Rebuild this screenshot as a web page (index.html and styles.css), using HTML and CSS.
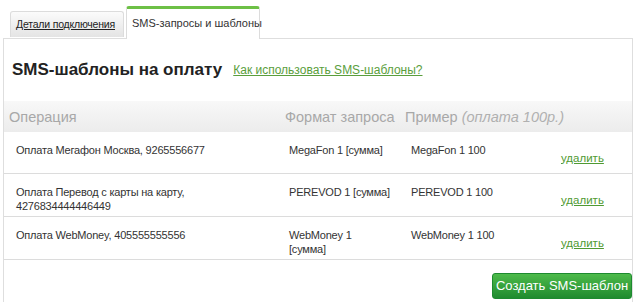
FILE: index.html
```html
<!DOCTYPE html>
<html lang="ru">
<head>
  <meta charset="UTF-8" />
  <title>SMS-шаблоны</title>
  <link rel="stylesheet" href="styles.css">
</head>
<body>
  <div class="wrap">
    <div class="tabs">
      <a class="tab" href="#">Детали подключения</a>
      <span class="tab active">SMS-запросы и шаблоны</span>
    </div>
    <div class="panel">
      <div class="title">
        <h1>SMS-шаблоны на оплату</h1>
        <a class="help" href="#">Как использовать SMS-шаблоны?</a>
      </div>
      <table class="templates">
        <colgroup>
          <col class="c-op">
          <col class="c-fmt">
          <col class="c-ex">
          <col class="c-del">
        </colgroup>
        <thead>
          <tr>
            <th>Операция</th>
            <th>Формат запроса</th>
            <th>Пример <i>(оплата 100р.)</i></th>
            <th></th>
          </tr>
        </thead>
        <tbody>
          <tr class="short">
            <td>Оплата Мегафон Москва, 9265556677</td>
            <td>MegaFon 1 [сумма]</td>
            <td>MegaFon 1 100</td>
            <td class="del"><a href="#">удалить</a></td>
          </tr>
          <tr>
            <td>Оплата Перевод с карты на карту,<br>4276834444446449</td>
            <td>PEREVOD 1 [сумма]</td>
            <td>PEREVOD 1 100</td>
            <td class="del"><a href="#">удалить</a></td>
          </tr>
          <tr>
            <td>Оплата WebMoney, 405555555556</td>
            <td class="narrow">WebMoney 1 [сумма]</td>
            <td>WebMoney 1 100</td>
            <td class="del"><a href="#">удалить</a></td>
          </tr>
        </tbody>
      </table>
      <div class="actions">
        <button class="create">Создать SMS-шаблон</button>
      </div>
    </div>
  </div>
</body>
</html>
```

FILE: styles.css
```css
body {
  margin: 0;
  font-family: "Liberation Sans", Arial, sans-serif;
  font-size: 12px;
  color: #333;
  background: #fff;
}
.wrap {
  margin-left: 3px;
  width: 630px;
}
/* Tabs */
.tabs {
  display: flex;
  align-items: flex-end;
  gap: 2px;
  padding: 6px 0 0 7px;
}
.tab {
  display: block;
  box-sizing: border-box;
  font-size: 11px;
  white-space: nowrap;
  color: #333;
  border: 1px solid #dcdcdc;
  border-bottom: none;
  border-radius: 3px 3px 0 0;
  padding: 0 5px;
}
.tabs a.tab {
  height: 26px;
  line-height: 24px;
  width: 114px;
  margin-bottom: 1px;
  font-size: 10.5px;
  letter-spacing: -0.2px;
  background: linear-gradient(#fbfbfb, #e4e4e4);
  text-decoration: underline;
  color: #222;
}
.tab.active {
  height: 33px;
  line-height: 28px;
  width: 134px;
  background: #fff;
  border-top: 3px solid #6dc046;
  margin-bottom: -1px;
  position: relative;
  z-index: 1;
}
/* Panel */
.panel {
  border: 1px solid #dedede;
  border-bottom: none;
  padding-bottom: 6px;
}
.title {
  display: flex;
  align-items: center;
  gap: 11px;
  height: 62px;
  padding-left: 8px;
}
.title h1 {
  margin: 0;
  font-size: 17px;
  font-weight: bold;
  color: #222;
}
.help {
  color: #5a9e3c;
  font-size: 12px;
}
/* Table */
.templates {
  width: 100%;
  border-collapse: collapse;
  table-layout: fixed;
}
.c-op { width: 276px; }
.c-fmt { width: 120px; }
.c-ex { width: 148px; }
.templates th {
  text-align: left;
  font-weight: normal;
  font-size: 14.5px;
  white-space: nowrap;
  color: #a8a8a8;
  height: 31px;
  padding: 0 0 0 5px;
  background: linear-gradient(#f8f8f8, #ececec);
}
.templates th i {
  color: #b0b0b0;
}
.templates tbody tr {
  height: 43px;
}
.templates tbody tr.short {
  height: 41px;
}
.templates td {
  vertical-align: top;
  padding: 11px 4px 3px 9px;
  border-bottom: 1px solid #dcdcdc;
  font-size: 11px;
  letter-spacing: -0.2px;
  line-height: 14px;
}
.templates td:first-child {
  padding-left: 12px;
}
.templates td:nth-child(3) {
  padding-left: 11px;
}
.templates td.narrow {
  padding-right: 40px;
}
.templates td.del {
  vertical-align: bottom;
  padding: 0 0 9px 13px;
  letter-spacing: 0;
}
.templates tr.short td.del {
  padding-bottom: 8px;
}
.del a {
  color: #4f9a32;
  font-size: 11.5px;
}
/* Actions */
.actions {
  display: flex;
  justify-content: flex-end;
  padding-top: 13px;
}
.create {
  width: 140px;
  height: 26px;
  padding: 0;
  white-space: nowrap;
  border: 1px solid #1d8a2f;
  border-radius: 3px;
  background: linear-gradient(#4dba4a, #1f8b2f);
  color: #fff;
  font-family: "Liberation Sans", Arial, sans-serif;
  font-size: 13px;
  cursor: pointer;
}
```
